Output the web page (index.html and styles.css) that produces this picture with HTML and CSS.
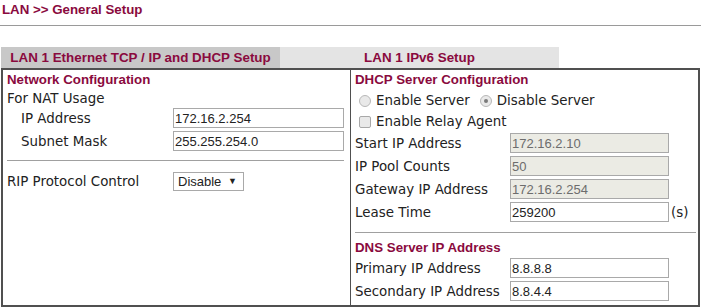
FILE: index.html
```html
<!DOCTYPE html>
<html lang="en">
<head>
  <meta charset="UTF-8" />
  <title>LAN General Setup</title>
  <link rel="stylesheet" href="styles.css">
</head>
<body>
  <header class="page-title">LAN &gt;&gt; General Setup</header>

  <ul class="tabs">
    <li class="tab active">LAN 1 Ethernet TCP / IP and DHCP Setup</li>
    <li class="tab">LAN 1 IPv6 Setup</li>
  </ul>

  <div class="panel">
    <section class="cell">
      <h3 class="heading">Network Configuration</h3>
      <div class="sub">For NAT Usage</div>
      <div class="row indent">
        <label>IP Address</label>
        <input class="field" type="text" value="172.16.2.254">
      </div>
      <div class="row indent">
        <label>Subnet Mask</label>
        <input class="field" type="text" value="255.255.254.0">
      </div>
      <hr class="sep">
      <div class="row rip">
        <label>RIP Protocol Control</label>
        <div class="select">Disable <span class="arrow">&#9660;</span></div>
      </div>
    </section>

    <section class="cell right">
      <h3 class="heading">DHCP Server Configuration</h3>
      <div class="choice">
        <span class="radio"></span><span class="opt">Enable Server</span>
        <span class="radio checked"></span><span>Disable Server</span>
      </div>
      <div class="choice check-row">
        <span class="checkbox"></span><span>Enable Relay Agent</span>
      </div>
      <div class="fields">
        <div class="row">
          <label>Start IP Address</label>
          <input class="field" type="text" value="172.16.2.10" disabled>
        </div>
        <div class="row">
          <label>IP Pool Counts</label>
          <input class="field" type="text" value="50" disabled>
        </div>
        <div class="row">
          <label>Gateway IP Address</label>
          <input class="field" type="text" value="172.16.2.254" disabled>
        </div>
        <div class="row">
          <label>Lease Time</label>
          <input class="field" type="text" value="259200">
          <span class="unit">(s)</span>
        </div>
      </div>
      <hr class="sep wide">
      <h3 class="heading dns">DNS Server IP Address</h3>
      <div class="fields">
        <div class="row">
          <label>Primary IP Address</label>
          <input class="field" type="text" value="8.8.8.8">
        </div>
        <div class="row">
          <label>Secondary IP Address</label>
          <input class="field" type="text" value="8.8.4.4">
        </div>
      </div>
    </section>
  </div>
</body>
</html>
```

FILE: styles.css
```css
* { margin: 0; padding: 0; box-sizing: border-box; }

body {
  background: #fff;
  font-family: 'DejaVu Sans', Verdana, sans-serif;
  font-size: 13.4px;
  color: #222;
}

.page-title {
  font-family: 'Liberation Sans', Arial, sans-serif;
  font-weight: bold;
  font-size: 13.3px;
  line-height: 18px;
  color: #8a0a3e;
  padding: 1px 0 6px 2px;
  border-bottom: 1px solid #9a9a9a;
}

.tabs {
  list-style: none;
  display: flex;
  margin: 21px 0 0 1px;
}

.tab {
  width: 279px;
  height: 21px;
  line-height: 21px;
  text-align: center;
  background: #e4e4e4;
  font-family: 'Liberation Sans', Arial, sans-serif;
  font-weight: bold;
  font-size: 13.4px;
  color: #8a0a3e;
}

.tab.active {
  background: #c8c8c8;
}

.panel {
  margin-left: 1px;
  width: 699px;
  border: 2px solid #505050;
  display: grid;
  grid-template-columns: 347px 1fr;
}

.cell {
  padding: 1px 4px 4px 4px;
}

.cell.right {
  border-left: 1px solid #505050;
}

.heading {
  font-family: 'Liberation Sans', Arial, sans-serif;
  font-weight: bold;
  font-size: 13.3px;
  line-height: 18px;
  color: #8a0a3e;
}

.sub {
  line-height: 18px;
  margin-top: 1px;
}

.row {
  display: flex;
  align-items: center;
  height: 20px;
}

.row + .row {
  margin-top: 3px;
}

.row label {
  width: 155px;
  flex: none;
}

.row.indent label {
  padding-left: 14px;
  width: 166px;
}

.field {
  width: 159px;
  height: 20px;
  border: 1px solid #a9a9a9;
  background: #fff;
  padding: 0 1px;
  font-family: 'Liberation Sans', Arial, sans-serif;
  font-size: 13px;
  color: #222;
  outline: none;
}

.cell:first-child .field {
  width: 171px;
}

.field:disabled {
  background: #ebebe4;
  color: #6d6d6d;
}

.unit {
  margin-left: 2px;
}

.sep {
  border: none;
  border-top: 1px solid #a0a0a0;
  margin: 9px 0 0 0;
  width: 337px;
}

.sep.wide {
  width: 341px;
  margin-top: 10px;
}

.rip {
  margin-top: 10px;
}

.rip label {
  width: 166px;
}

.select {
  width: 71px;
  height: 19px;
  border: 1px solid #a9a9a9;
  font-family: 'Liberation Sans', Arial, sans-serif;
  font-size: 13px;
  line-height: 17px;
  padding-left: 4px;
  color: #222;
}

.arrow {
  font-size: 9px;
  vertical-align: 2px;
  margin-left: 3px;
}

.choice {
  display: flex;
  align-items: center;
  height: 23px;
  padding-left: 4px;
}

.check-row {
  height: 19px;
  margin-bottom: 2px;
}

.radio {
  width: 12px;
  height: 12px;
  border-radius: 50%;
  border: 1px solid #b8b8b8;
  background: #e9e9e9;
  margin-right: 5px;
  position: relative;
}

.radio.checked::after {
  content: '';
  position: absolute;
  left: 3px;
  top: 3px;
  width: 4px;
  height: 4px;
  border-radius: 50%;
  background: #7a7a7a;
}

.opt {
  margin-right: 10px;
}

.checkbox {
  width: 12px;
  height: 12px;
  border-radius: 2px;
  border: 1px solid #a8a8a8;
  background: #e9e9e9;
  margin-right: 5px;
}

.dns {
  margin-top: 6px;
  margin-bottom: 1px;
}
```
